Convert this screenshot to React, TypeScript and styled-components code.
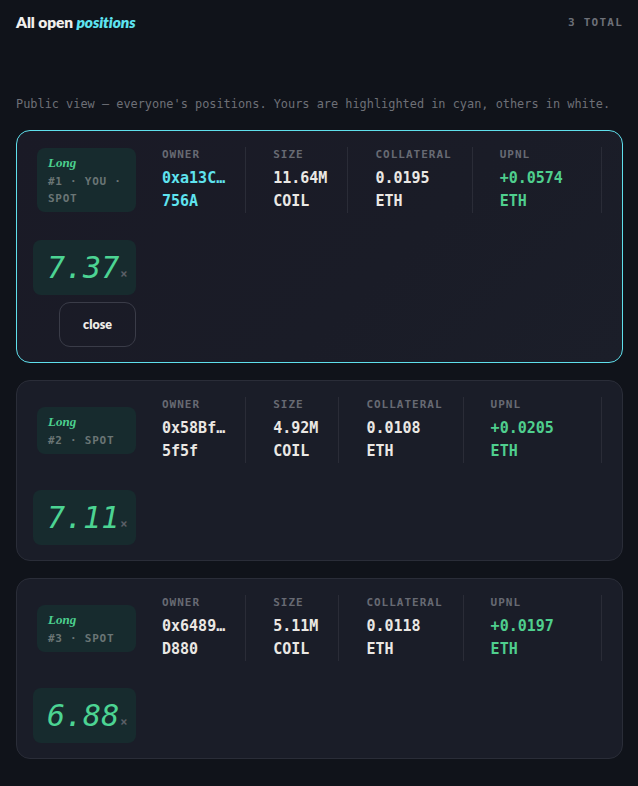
import React from "react";
import styled, { createGlobalStyle } from "styled-components";

const Global = createGlobalStyle`
  html, body { margin: 0; padding: 0; background: #10131a; }
  body { font-family: "DejaVu Sans Mono", monospace; }
`;

const MONO = `"DejaVu Sans Mono", "Liberation Mono", monospace`;
const SANS = `"Lato", "Inter", sans-serif`;

const Page = styled.div`
  min-height: 786px;
  box-sizing: border-box;
  padding: 12px 15px 24px 16px;
  background: #10131a;
`;

const Header = styled.div`
  display: flex;
  justify-content: space-between;
  align-items: center;
  height: 20px;
`;

const Title = styled.h1`
  margin: 0;
  font-family: ${SANS};
  font-weight: 800;
  font-size: 15.5px;
  letter-spacing: -0.1px;
  color: #f1efec;
`;

const Accent = styled.em`
  font-style: italic;
  color: #5ee3f0;
`;

const Total = styled.span`
  font-family: ${MONO};
  font-size: 11px;
  font-weight: 700;
  letter-spacing: 1.25px;
  color: #6d7078;
`;

const Subtitle = styled.p`
  margin: 63px 0 17px;
  font-family: ${MONO};
  font-size: 11.9px;
  line-height: 18px;
  color: #6e7077;
`;

const List = styled.div`
  display: flex;
  flex-direction: column;
  gap: 17px;
`;

const Card = styled.div<{ $mine?: boolean }>`
  display: grid;
  grid-template-columns: 103px 1fr;
  column-gap: 26px;
  row-gap: 27px;
  padding: 16px 20px 15px 16px;
  border-radius: 14px;
  border: 1px solid ${(p) => (p.$mine ? "#5fe0ec" : "#2a2d38")};
  background: ${(p) =>
    p.$mine
      ? "linear-gradient(135deg, #1a1a26 0%, #1a1c27 60%, #1b1e29 100%)"
      : "#1a1d28"};
`;

const Badge = styled.div`
  justify-self: end;
  align-self: center;
  width: 99px;
  box-sizing: border-box;
  padding: 7px 11px 5px;
  border-radius: 8px;
  background: #172b2e;
`;

const Side = styled.div`
  font-family: "Liberation Serif", serif;
  font-style: italic;
  font-weight: 700;
  font-size: 13px;
  line-height: 16px;
  color: #4cd08e;
  margin-bottom: 2px;
`;

const Meta = styled.div`
  font-family: ${MONO};
  font-size: 11px;
  font-weight: 700;
  line-height: 17px;
  letter-spacing: 0.75px;
  color: #6a7575;
`;

const Stats = styled.div`
  display: flex;
  align-items: stretch;
`;

const Stat = styled.div<{ $last?: boolean }>`
  display: flex;
  flex-direction: column;
  padding: 0 20px 0 27px;
  border-right: 1px solid #2a2c37;
  flex-grow: ${(p) => (p.$last ? 1 : 0)};
  &:first-child { padding-left: 0; }
`;

const Label = styled.div`
  font-family: ${MONO};
  font-size: 11px;
  font-weight: 700;
  line-height: 14px;
  letter-spacing: 1px;
  color: #676a73;
  margin-top: 1px;
  margin-bottom: 5px;
`;

const Value = styled.div<{ $tone?: "cyan" | "green" | "white" }>`
  font-family: ${MONO};
  font-size: 15px;
  font-weight: 700;
  line-height: 23px;
  white-space: pre;
  color: ${(p) =>
    p.$tone === "cyan" ? "#5fe3ef" : p.$tone === "green" ? "#4fcf8e" : "#ebe8e4"};
`;

const LeftBottom = styled.div`
  display: flex;
  flex-direction: column;
  align-items: flex-end;
  gap: 7px;
`;

const Leverage = styled.div`
  display: flex;
  align-items: baseline;
  box-sizing: border-box;
  width: 103px;
  height: 55px;
  padding: 0 10px 0 14px;
  border-radius: 8px;
  background: #172b2e;
  line-height: 55px;
`;

const LevNum = styled.span`
  font-family: ${MONO};
  font-style: italic;
  font-size: 30px;
  color: #4cd493;
`;

const LevX = styled.span`
  font-family: ${MONO};
  font-size: 12px;
  font-weight: 700;
  margin-left: 1px;
  color: #5b5f66;
`;

const CloseBtn = styled.button`
  width: 77px;
  height: 45px;
  border-radius: 11px;
  border: 1px solid #3a3c48;
  background: transparent;
  color: #efece8;
  font-family: ${SANS};
  font-weight: 800;
  font-size: 12.5px;
  cursor: pointer;
`;

type Pos = {
  id: number;
  mine: boolean;
  owner: [string, string];
  size: [string, string];
  coll: [string, string];
  upnl: [string, string];
  lev: string;
};

const positions: Pos[] = [
  { id: 1, mine: true, owner: ["0xa13C…", "756A"], size: ["11.64M", "COIL"], coll: ["0.0195", "ETH"], upnl: ["+0.0574", "ETH"], lev: "7.37" },
  { id: 2, mine: false, owner: ["0x58Bf…", "5f5f"], size: ["4.92M", "COIL"], coll: ["0.0108", "ETH"], upnl: ["+0.0205", "ETH"], lev: "7.11" },
  { id: 3, mine: false, owner: ["0x6489…", "D880"], size: ["5.11M", "COIL"], coll: ["0.0118", "ETH"], upnl: ["+0.0197", "ETH"], lev: "6.88" },
];

function PositionCard({ p }: { p: Pos }) {
  return (
    <Card $mine={p.mine}>
      <Badge>
        <Side>Long</Side>
        <Meta>{p.mine ? `#${p.id} · YOU · SPOT` : `#${p.id} · SPOT`}</Meta>
      </Badge>
      <Stats>
        <Stat>
          <Label>OWNER</Label>
          <Value $tone={p.mine ? "cyan" : "white"}>{p.owner[0]}</Value>
          <Value $tone={p.mine ? "cyan" : "white"}>{p.owner[1]}</Value>
        </Stat>
        <Stat>
          <Label>SIZE</Label>
          <Value>{p.size[0]}</Value>
          <Value>{p.size[1]}</Value>
        </Stat>
        <Stat>
          <Label>COLLATERAL</Label>
          <Value>{p.coll[0]}</Value>
          <Value>{p.coll[1]}</Value>
        </Stat>
        <Stat $last>
          <Label>UPNL</Label>
          <Value $tone="green">{p.upnl[0]}</Value>
          <Value $tone="green">{p.upnl[1]}</Value>
        </Stat>
      </Stats>
      <LeftBottom>
        <Leverage>
          <LevNum>{p.lev}</LevNum>
          <LevX>×</LevX>
        </Leverage>
        {p.mine && <CloseBtn>close</CloseBtn>}
      </LeftBottom>
    </Card>
  );
}

export default function App() {
  return (
    <Page>
      <Global />
      <Header>
        <Title>
          All open <Accent>positions</Accent>
        </Title>
        <Total>3 TOTAL</Total>
      </Header>
      <Subtitle>
        Public view — everyone's positions. Yours are highlighted in cyan, others in white.
      </Subtitle>
      <List>
        {positions.map((p) => (
          <PositionCard key={p.id} p={p} />
        ))}
      </List>
    </Page>
  );
}
